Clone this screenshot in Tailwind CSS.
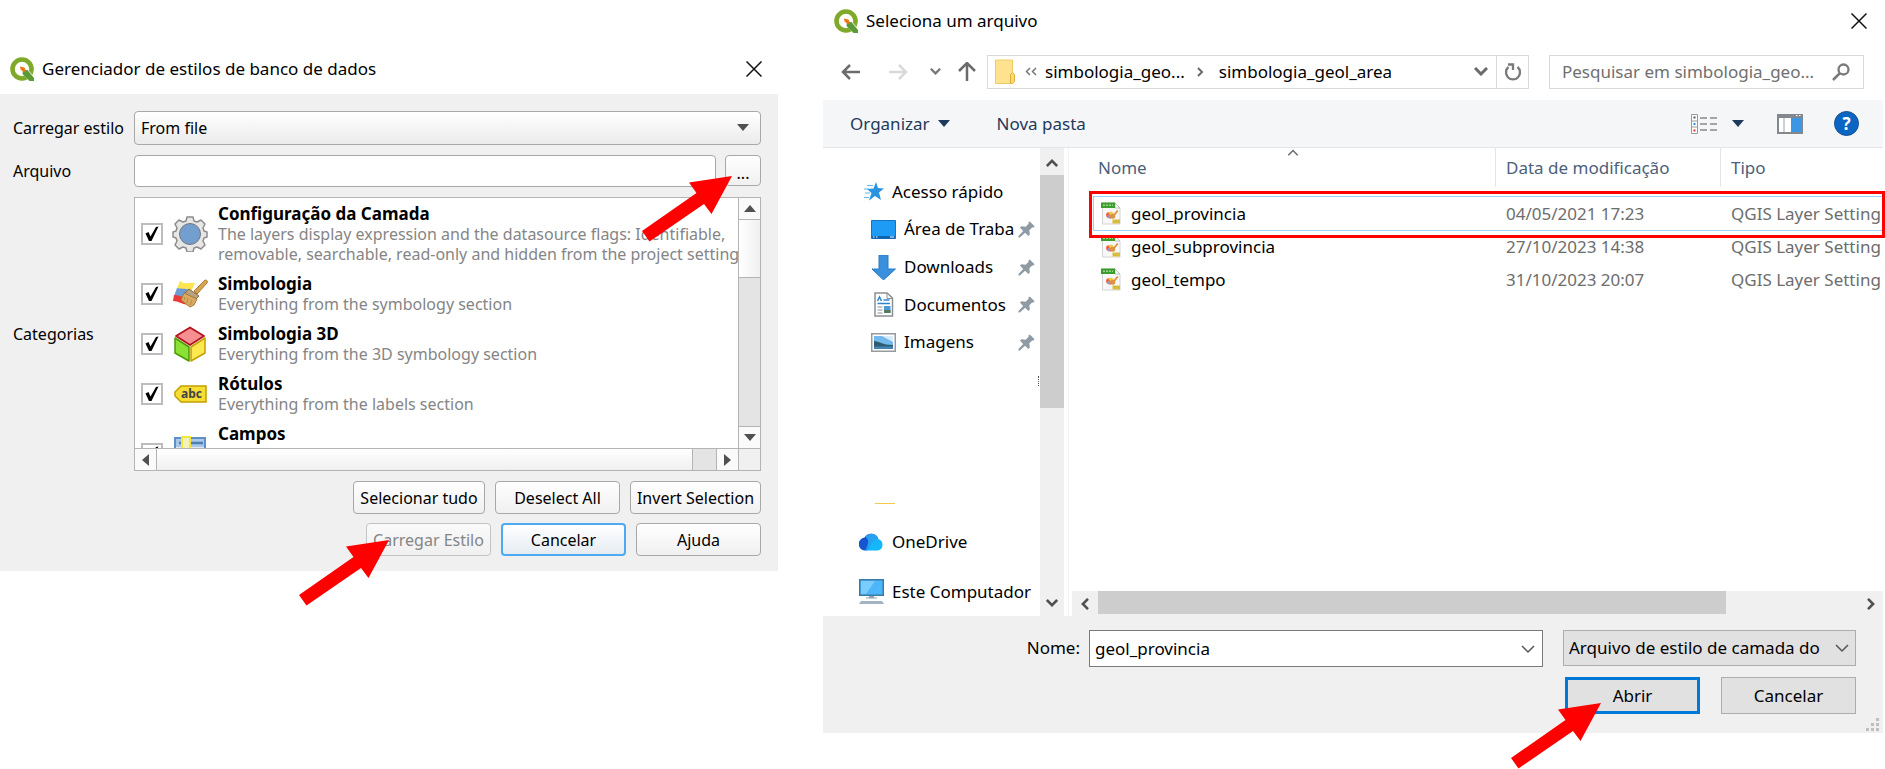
<!DOCTYPE html>
<html lang="pt-BR">
<head>
    <meta charset="UTF-8">
    <meta name="viewport" content="width=device-width, initial-scale=1.0">
    <title>QGIS - Carregar estilo</title>
    <script src="https://cdn.jsdelivr.net/npm/@tailwindcss/browser@4"></script>
    <style>
        body {
            font-family: 'Noto Sans', 'Open Sans', sans-serif;
        }
    </style>
</head>
<body class="min-h-screen bg-white text-[17px] leading-5 text-black overflow-x-hidden">
    <!-- Shared shapes -->
    <svg class="hidden">
        <symbol id="qgis" viewBox="0 0 24 24">
            <circle cx="12" cy="12" r="9.5" fill="none" stroke="#7fa929" stroke-width="4.6" />
            <path d="M13.5 12.5h4.5l6 7.5v4h-4.500l-7.500-7.500z" fill="#fff" />
            <path d="M13 13h4.500l6.500 8v3h-4.500l-7-7z" fill="#5c9a35" />
            <path d="M10 9.500l4.500 1 1.500 3.500-2.500 1-3-2.500z" fill="#ee7913" />
        </symbol>
        <symbol id="close" viewBox="0 0 16 16">
            <path d="M0.500 0.500l15 15M15.500 0.500l-15 15" fill="none" stroke="#111" stroke-width="1.500" />
        </symbol>
        <symbol id="arrow" viewBox="0 0 90 67">
            <path d="M90 1L69.500 39 62 29 7.500 66.500 0 56 54.500 18 47 7.500z" fill="#ff0000" />
        </symbol>
        <symbol id="check" viewBox="0 0 22 22">
            <path d="M4.500 10.500l3-1.500 2 4.500L15 4l2.500-.5L10.500 18H8z" fill="#000" />
        </symbol>
        <symbol id="chevron" viewBox="0 0 14 9">
            <path d="M1 1l6 6 6-6" fill="none" stroke="currentColor" />
        </symbol>
        <symbol id="pin" viewBox="0 0 18 18">
            <path d="M11 1.500L12.500.5l5 5-1 1.500-1.500-.2-3 3 .5 4.500-1.500 1.700-3.500-3.500L2 17.500H.5V16l5-5.500L2 7l1.700-1.500 4.500.5 3-3z" fill="#8f9aa3" />
        </symbol>
        <symbol id="qml" viewBox="0 0 20 23">
            <path d="M1.500 1h12.500l5 5v16H1.500z" fill="#f8f8f8" stroke="#d4d4d4" />
            <path d="M14 1v5h5z" fill="#fff" stroke="#bdbdbd" />
            <path d="M0 .5h14v5.500H0z" fill="#3a9d2c" />
            <path d="M2 3.300h10" stroke="#9ad48f" stroke-width="1.500" stroke-dasharray="2 1" />
            <path d="M5 13c0-2.500 3-3.500 5.500-2.500l3 3-3 3C7.500 17 5 15.500 5 13z" fill="#ef5a3c" />
            <path d="M7 10.500l4-1 2 2.500-4 1z" fill="#f3c94a" />
            <path d="M6 13.500l3-.5.5 2.500-2 .5z" fill="#7aa6d8" />
            <path d="M16 8l1.500 1-3.500 4.500.3 2-2.300 1.500-3.500-2.500 2-2.500 2.500-.3z" fill="#dd9344" />
            <path d="M11.500 17.500H19v4h-7.500z" fill="#d8bd3c" />
        </symbol>
    </svg>

    <main class="grid grid-cols-[778fr_1060fr] gap-[45px] pr-[2px] pb-9 items-start">

        <!-- Database styles manager -->
        <section class="pt-[44px]">
            <header class="h-[50px] pl-[10px] pr-4 flex items-center">
                <svg class="size-[24px] mr-2"><use href="#qgis" /></svg>
                <h1 class="flex-1">Gerenciador de estilos de banco de dados</h1>
                <button aria-label="Fechar"><svg class="size-4"><use href="#close" /></svg></button>
            </header>

            <form class="bg-[#f0f0f0] pt-[17px] pb-[15px] pl-[13px] pr-[17px] text-[16px]">
                <div class="grid grid-cols-[121px_1fr] gap-y-[10px] items-center">
                    <label for="load-from">Carregar estilo</label>
                    <div class="relative">
                        <select id="load-from" class="appearance-none block w-full h-[34px] pl-[6px] border border-[#a8a8a8] rounded bg-linear-to-b from-white to-[#ebebeb]">
                            <option>From file</option>
                        </select>
                        <svg class="absolute right-3 top-[13px] w-3 h-[7px]" viewBox="0 0 12 7"><path d="M0 0h12L6 7z" fill="#505050" /></svg>
                    </div>

                    <label for="file">Arquivo</label>
                    <div class="flex gap-[9px]">
                        <input id="file" type="text" class="flex-1 h-8 px-2 bg-white border border-[#a8a8a8] rounded">
                        <div class="relative">
                            <button type="button" class="block w-9 h-[31px] pt-1 border border-[#a8a8a8] rounded bg-linear-to-b from-white to-[#f0f0f0]">...</button>
                            <svg class="absolute right-[29px] top-5 w-[90px] h-[67px] z-10"><use href="#arrow" /></svg>
                        </div>
                    </div>

                    <span>Categorias</span>
                    <div class="h-[274px] bg-white border border-[#b4b4b4] grid grid-cols-[1fr_22px] grid-rows-[1fr_22px] overflow-hidden">
                        <div class="overflow-hidden pl-[6px] pt-px h-[250px]">
                            <label class="flex items-center h-[70px] whitespace-nowrap">
                                <span class="relative shrink-0 mr-[9px]">
                                    <input type="checkbox" checked class="block appearance-none size-[22px] border-2 border-[#bdbdbd] bg-white">
                                    <svg class="absolute inset-0 size-[22px]"><use href="#check" /></svg>
                                </span>
                                <svg class="shrink-0 size-9 mr-[10px]" viewBox="0 0 36 36">
                                    <path d="M15 1h6l1 4 3 1 4-2 4 4-2 4 1 3 3 1v5l-3 1-1 3 2 4-4 4-4-2-3 1-1 4h-6l-1-4-3-1-4 2-4-4 2-4-1-3-3-1v-5l3-1 1-3-2-4 4-4 4 2 3-1z" fill="#e6e6e6" stroke="#8c8c8c" stroke-width="1.500" stroke-linejoin="round" />
                                    <circle cx="18" cy="18" r="10.500" fill="#729fcf" stroke="#777" />
                                </svg>
                                <span>
                                    <b class="block text-[17px]">Configuração da Camada</b>
                                    <span class="block text-[#858585]">The layers display expression and the datasource flags: Identifiable,<br>removable, searchable, read-only and hidden from the project settings</span>
                                </span>
                            </label>
                            <label class="flex items-center h-[50px] whitespace-nowrap">
                                <span class="relative shrink-0 mr-[9px]">
                                    <input type="checkbox" checked class="block appearance-none size-[22px] border-2 border-[#bdbdbd] bg-white">
                                    <svg class="absolute inset-0 size-[22px]"><use href="#check" /></svg>
                                </span>
                                <svg class="shrink-0 size-9 mr-[10px]" viewBox="0 0 36 36">
                                    <path d="M8 5c5 4 9 1 15 2l-4 9-14-4z" fill="#fbe652" />
                                    <path d="M5 12c4 1 8 0 13 2l-3 9-13-3z" fill="#6f9bd0" />
                                    <path d="M2 19c4 0 7 2 11 2l4 7c-5 2-10-3-16-3z" fill="#ea3a34" />
                                    <path d="M33 4c2 0 3 1 2 3L25 18l-3-3z" fill="#d9a44e" stroke="#a87a35" />
                                    <path d="M17 13l10 7-3 3-12-5z" fill="#b9a184" stroke="#8d6a35" />
                                    <path d="M12 17l13 6-3 6-4 2-9-7z" fill="#d9aa62" stroke="#a87a35" />
                                    <path d="M13 21l-1 3M16 22l-1 5M20 24l-2 5" stroke="#b98942" />
                                </svg>
                                <span>
                                    <b class="block text-[17px]">Simbologia</b>
                                    <span class="block text-[#858585]">Everything from the symbology section</span>
                                </span>
                            </label>
                            <label class="flex items-center h-[50px] whitespace-nowrap">
                                <span class="relative shrink-0 mr-[9px]">
                                    <input type="checkbox" checked class="block appearance-none size-[22px] border-2 border-[#bdbdbd] bg-white">
                                    <svg class="absolute inset-0 size-[22px]"><use href="#check" /></svg>
                                </span>
                                <svg class="shrink-0 size-9 mr-[10px]" viewBox="0 0 36 36">
                                    <path d="M18 1.500l14 8.500-14 9-14-9z" fill="#f58f92" stroke="#b3131b" stroke-width="1.800" stroke-linejoin="round" />
                                    <path d="M3 12l14 9v14L3 27z" fill="#8ae234" stroke="#4e9a06" stroke-width="1.500" stroke-linejoin="round" />
                                    <path d="M33 12l-14 9v14l14-8z" fill="#fce94f" stroke="#c4a000" stroke-width="1.500" stroke-linejoin="round" />
                                </svg>
                                <span>
                                    <b class="block text-[17px]">Simbologia 3D</b>
                                    <span class="block text-[#858585]">Everything from the 3D symbology section</span>
                                </span>
                            </label>
                            <label class="flex items-center h-[50px] whitespace-nowrap">
                                <span class="relative shrink-0 mr-[9px]">
                                    <input type="checkbox" checked class="block appearance-none size-[22px] border-2 border-[#bdbdbd] bg-white">
                                    <svg class="absolute inset-0 size-[22px]"><use href="#check" /></svg>
                                </span>
                                <svg class="shrink-0 size-9 mr-[10px]" viewBox="0 0 36 36">
                                    <path d="M9 10h25v16H9l-6-6v-4z" fill="#f6de35" stroke="#c4a000" stroke-width="1.500" />
                                    <text x="9" y="22" font-size="12" font-weight="700" fill="#444">abc</text>
                                </svg>
                                <span>
                                    <b class="block text-[17px]">Rótulos</b>
                                    <span class="block text-[#858585]">Everything from the labels section</span>
                                </span>
                            </label>
                            <label class="flex items-center h-[70px] whitespace-nowrap">
                                <span class="relative shrink-0 mr-[9px]">
                                    <input type="checkbox" checked class="block appearance-none size-[22px] border-2 border-[#bdbdbd] bg-white">
                                    <svg class="absolute inset-0 size-[22px]"><use href="#check" /></svg>
                                </span>
                                <svg class="shrink-0 size-9 mr-[10px]" viewBox="0 0 36 36">
                                    <path d="M3 2h30v30H3z" fill="#dce9f6" stroke="#5f8fc4" stroke-width="2" />
                                    <path d="M4 3h28v8H4z" fill="#a9c8e8" />
                                    <path d="M7 7h24" stroke="#4d7fb5" stroke-width="2.500" />
                                    <path d="M10 1h8v30h-8z" fill="#f5f0c0" stroke="#f5e63c" stroke-width="2" />
                                </svg>
                                <span>
                                    <b class="block text-[17px]">Campos</b>
                                    <span class="block text-[#858585]">Virtual fields, aliases, default value expressions and constraints from<br>the form section</span>
                                </span>
                            </label>
                        </div>
                        <!-- vertical scrollbar -->
                        <div class="border-l border-[#b4b4b4] bg-[#e4e4e4] flex flex-col">
                            <div class="h-[22px] bg-[#fafafa] border-b border-[#b4b4b4] grid place-items-center">
                                <svg class="w-3 h-[7px]" viewBox="0 0 12 7"><path d="M0 7h12L6 0z" fill="#505050" /></svg>
                            </div>
                            <div class="h-[58px] bg-linear-to-r from-white to-[#f0f0f0] border-b border-[#b4b4b4]"></div>
                            <div class="mt-auto h-[22px] bg-[#fafafa] border-t border-[#b4b4b4] grid place-items-center">
                                <svg class="w-3 h-[7px]" viewBox="0 0 12 7"><path d="M0 0h12L6 7z" fill="#505050" /></svg>
                            </div>
                        </div>
                        <!-- horizontal scrollbar -->
                        <div class="border-t border-[#b4b4b4] bg-[#e4e4e4] flex">
                            <div class="w-[22px] bg-[#fafafa] border-r border-[#b4b4b4] grid place-items-center">
                                <svg class="w-[7px] h-3" viewBox="0 0 7 12"><path d="M7 0v12L0 6z" fill="#505050" /></svg>
                            </div>
                            <div class="flex-1 mr-[23px] bg-linear-to-b from-white to-[#f0f0f0] border-r border-[#b4b4b4]"></div>
                            <div class="w-[22px] bg-[#fafafa] border-l border-[#b4b4b4] grid place-items-center">
                                <svg class="w-[7px] h-3" viewBox="0 0 7 12"><path d="M0 0v12l7-6z" fill="#505050" /></svg>
                            </div>
                        </div>
                        <div class="border-t border-l border-[#b4b4b4] bg-[#f0f0f0]"></div>
                    </div>
                </div>

                <div class="mt-[10px] flex justify-end gap-[10px]">
                    <button type="button" class="w-[132px] h-[33px] border border-[#a8a8a8] rounded bg-linear-to-b from-white to-[#f0f0f0] whitespace-nowrap">Selecionar tudo</button>
                    <button type="button" class="w-[125px] h-[33px] border border-[#a8a8a8] rounded bg-linear-to-b from-white to-[#f0f0f0]">Deselect All</button>
                    <button type="button" class="w-[131px] h-[33px] border border-[#a8a8a8] rounded bg-linear-to-b from-white to-[#f0f0f0] whitespace-nowrap">Invert Selection</button>
                </div>
                <div class="mt-[9px] flex justify-end gap-[10px]">
                    <div class="relative">
                        <button type="button" disabled class="block w-[125px] h-[33px] border border-[#c4c4c4] rounded bg-linear-to-b from-[#fafafa] to-[#f0f0f0] text-[#858585] whitespace-nowrap">Carregar Estilo</button>
                        <svg class="absolute right-[102px] top-4 w-[90px] h-[67px] z-10"><use href="#arrow" /></svg>
                    </div>
                    <button type="button" class="w-[125px] h-[33px] border-2 border-[#4daaf2] rounded bg-linear-to-b from-white to-[#e6ecf2]">Cancelar</button>
                    <button type="button" class="w-[125px] h-[33px] border border-[#a8a8a8] rounded bg-linear-to-b from-white to-[#f0f0f0]">Ajuda</button>
                </div>
            </form>
        </section>

        <!-- File picker -->
        <section>
            <header class="h-[42px] pl-[11px] pr-4 flex items-center">
                <svg class="size-[24px] mr-2"><use href="#qgis" /></svg>
                <h1 class="flex-1">Seleciona um arquivo</h1>
                <button aria-label="Fechar"><svg class="size-4"><use href="#close" /></svg></button>
            </header>

            <nav class="h-[58px] pl-[18px] pr-[19px] pt-px flex items-center">
                <button aria-label="Voltar"><svg class="w-5 h-4" viewBox="0 0 20 16"><path d="M9 1L2 8l7 7M2 8h17" fill="none" stroke="#6b6b6b" stroke-width="2.500" /></svg></button>
                <button aria-label="Avançar" class="ml-[27px]"><svg class="w-5 h-4" viewBox="0 0 20 16"><path d="M11 1l7 7-7 7M18 8H1" fill="none" stroke="#d9d9d9" stroke-width="2.500" /></svg></button>
                <button aria-label="Recentes" class="ml-[22px]"><svg class="w-[11px] h-[7px] text-[#7a7a7a] stroke-[3px]"><use href="#chevron" /></svg></button>
                <button aria-label="Acima" class="ml-[17px]"><svg class="w-[18px] h-[19px]" viewBox="0 0 18 19"><path d="M1 9l8-8 8 8M9 1.500V19" fill="none" stroke="#6b6b6b" stroke-width="2.500" /></svg></button>
                <div class="ml-[11px] flex-1 h-[34px] border border-[#d9d9d9] flex items-center">
                    <svg class="w-5 h-[26px] ml-[7px]" viewBox="0 0 20 26"><path d="M.5 1H17.500V24.500H.5z" fill="#ffe290" stroke="#f0cc62" /><path d="M15.500 24.500v-9l2-2 2 2v7l-2 2z" fill="#ffd969" stroke="#dcb040" /></svg>
                    <svg class="w-3 h-[9px] ml-[10px]" viewBox="0 0 12 9"><path d="M5 1L1.500 4.500 5 8M11 1L7.500 4.500 11 8" fill="none" stroke="#777" stroke-width="1.500" /></svg>
                    <a href="#" class="ml-2">simbologia_geo...</a>
                    <svg class="w-[7px] h-[10px] ml-3" viewBox="0 0 7 10"><path d="M1 1l4 4-4 4" fill="none" stroke="#6b6b6b" stroke-width="2" /></svg>
                    <a href="#" class="ml-[15px] flex-1">simbologia_geol_area</a>
                    <button aria-label="Histórico" class="mr-[8px]"><svg class="w-[14px] h-[9px] text-[#6b6b6b] stroke-[3px]"><use href="#chevron" /></svg></button>
                    <button aria-label="Atualizar" class="w-8 h-8 border-l border-[#d9d9d9] grid place-items-center">
                        <svg class="size-[18px]" viewBox="0 0 18 18"><path d="M4.500 4A7 7 0 1 0 13.500 4M4 1.500h5v5.500" fill="none" stroke="#7a7a7a" stroke-width="2.300" /></svg>
                    </button>
                </div>
                <div class="ml-[20px] w-[315px] h-[34px] border border-[#d9d9d9] flex items-center">
                    <input type="search" aria-label="Pesquisar" placeholder="Pesquisar em simbologia_geo..." class="flex-1 min-w-0 pl-3 outline-none placeholder:text-[#6f6f6f]">
                    <svg class="size-[18px] mr-[13px]" viewBox="0 0 18 18"><circle cx="11.500" cy="6.500" r="5" fill="none" stroke="#7a7a7a" stroke-width="2.300" /><path d="M8 10l-7 7" stroke="#7a7a7a" stroke-width="2.500" /></svg>
                </div>
            </nav>

            <div class="h-12 bg-[#f5f6f7] border-b border-[#e3e5e8] pl-[27px] pr-6 flex items-center text-[#1e395b]">
                <button class="flex items-center gap-2">Organizar <svg class="w-3 h-[7px]" viewBox="0 0 12 7"><path d="M0 0h12L6 7z" fill="#1e395b" /></svg></button>
                <button class="ml-[47px]">Nova pasta</button>
                <button aria-label="Modo de exibição" class="ml-auto flex items-center gap-[15px]">
                    <svg class="w-[26px] h-5" viewBox="0 0 26 20">
                        <path d="M.5.500h6v19h-6zM.5 7h6M.5 13h6" fill="#fff" stroke="#9a9a9a" />
                        <path d="M2.500 3.500h2" stroke="#555" stroke-width="2" /><path d="M2.500 10h2" stroke="#2a8dea" stroke-width="2" /><path d="M2.500 16.500h2" stroke="#e0352c" stroke-width="2" />
                        <path d="M9 4h7M19 4h7M9 10h7M19 10h7M9 16h7M19 16h7" stroke="#8a8a8a" stroke-width="1.500" />
                    </svg>
                    <svg class="w-3 h-[7px]" viewBox="0 0 12 7"><path d="M0 0h12L6 7z" fill="#1e395b" /></svg>
                </button>
                <button aria-label="Painel de visualização" class="ml-[33px]">
                    <svg class="w-[26px] h-5" viewBox="0 0 26 20"><path d="M1 1h24v18H1z" fill="#fff" stroke="#82888e" stroke-width="2" /><path d="M0 0h26v4H0z" fill="#82888e" /><path d="M7 4v14" stroke="#9da3a8" /><path d="M14 4h10v14H14z" fill="#3b97e3" /><path d="M19 1.500h1.500M22 1.500h1.500" stroke="#fff" /></svg>
                </button>
                <button aria-label="Ajuda" class="ml-[31px] size-[25px] rounded-full bg-[#0a66c2] border border-[#16508f] text-white font-bold leading-[22px]">?</button>
            </div>

            <div class="flex h-[468px]">
                <!-- Places -->
                <aside class="relative w-[217px] pt-[25px] overflow-hidden">
                    <a href="#" class="flex items-center h-[37px] pl-[41px]">
                        <svg class="w-5 h-[19px] mr-2" viewBox="0 0 20 19"><path d="M12 0l2 6 6 .5-5 4 2 7.500-6-4-6 4.500 2.500-7.500L3 7l6.500-.5z" fill="#2b93e0" /><path d="M3 3.500h6M0 7h5M1 11h5M0 15.500h5" stroke="#65b5ee" stroke-width="1.200" /></svg>
                        Acesso rápido
                    </a>
                    <a href="#" class="flex items-center h-[38px] pl-12 pr-[5px]">
                        <svg class="w-[25px] h-[19px] mr-2 shrink-0" viewBox="0 0 25 19"><path d="M.5.500h24v18H.5z" fill="#1e9bf4" stroke="#1673c2" /><path d="M1 16h23v2.500H1z" fill="#0f62ad" /><path d="M2 17h1.500M5 17h1.500M19 17h4" stroke="#fff" stroke-width="1.200" /></svg>
                        <span class="flex-1 overflow-hidden whitespace-nowrap">Área de Trabalho</span>
                        <svg class="size-[17px] ml-1 shrink-0"><use href="#pin" /></svg>
                    </a>
                    <a href="#" class="flex items-center h-[38px] pl-12 pr-[5px]">
                        <svg class="w-[25px] h-[25px] mr-2 shrink-0" viewBox="0 0 25 25"><path d="M8 0h9v14h7.500L12.500 25 1 14h7z" fill="#3a90dc" stroke="#2b7cc6" /></svg>
                        <span class="flex-1">Downloads</span>
                        <svg class="size-[17px] ml-1 shrink-0"><use href="#pin" /></svg>
                    </a>
                    <a href="#" class="flex items-center h-[37px] pl-12 pr-[5px]">
                        <svg class="w-[25px] h-[25px] mr-2 shrink-0" viewBox="0 0 25 25"><path d="M4 1h12l5.500 5v18H4z" fill="#fff" stroke="#8a8f94" stroke-width="1.500" /><path d="M16 1v5.500h5" fill="none" stroke="#8a8f94" /><path d="M6.500 9l2-4 2 4M12.500 8h6M6.500 11.500h12.500" fill="none" stroke="#2f86d0" stroke-width="1.500" /><path d="M6.500 15h5M6.500 18h5M6.500 21h5" stroke="#8a8f94" /><path d="M13 14h6.500v7H13z" fill="#4b9ad0" /><path d="M13 18h6.500v3H13z" fill="#557a5c" /></svg>
                        <span class="flex-1">Documentos</span>
                        <svg class="size-[17px] ml-1 shrink-0"><use href="#pin" /></svg>
                    </a>
                    <a href="#" class="flex items-center h-[38px] pl-12 pr-[5px]">
                        <svg class="w-[25px] h-[19px] mr-2 shrink-0" viewBox="0 0 25 19"><path d="M.75.750h23.500v17.500H.75z" fill="#fff" stroke="#959a9f" stroke-width="1.500" /><path d="M3 3h19v13H3z" fill="#74b9ec" /><path d="M11 3h11v6z" fill="#d8edfa" /><path d="M3 8c5 0 8 4 19 4v4H3z" fill="#2f5c70" /><path d="M3 13.500h19V16H3z" fill="#4386b5" /></svg>
                        <span class="flex-1">Imagens</span>
                        <svg class="size-[17px] ml-1 shrink-0"><use href="#pin" /></svg>
                    </a>
                    <div class="mt-[15px] ml-auto mr-px w-px h-[10px] border-l border-dotted border-[#555]"></div>
                    <div class="mt-[117px] ml-[52px] w-5 h-px bg-[#f2c94c]"></div>
                    <a href="#" class="mt-[19px] flex items-center h-[37px] pl-9">
                        <svg class="w-[25px] h-[18px] mr-2" viewBox="0 0 25 18"><path d="M7 17.500a6.500 6.500 0 0 1-1.500-13A7.500 7.500 0 0 1 19 5.500L12 16z" fill="#1456d0" /><path d="M6.500 3.500A7.500 7.500 0 0 1 19.500 6L13 12 6 17.500C9 12 11 8 6.500 3.500z" fill="#27a0f0" /><path d="M6 17.500C12 16 12 6 19.500 6a6 6 0 0 1-.5 11.500z" fill="#16b6fb" /></svg>
                        OneDrive
                    </a>
                    <a href="#" class="mt-[13px] flex items-center h-[37px] pl-9 whitespace-nowrap">
                        <svg class="w-[25px] h-[25px] mr-2 shrink-0" viewBox="0 0 25 25"><path d="M.75.750h23.500v15.500H.75z" fill="#4db6fb" stroke="#3a7ba8" stroke-width="1.500" /><path d="M2 2h14L7 15H2z" fill="#7accfd" /><path d="M10 17h5v1.500h3v1H7v-1h3z" fill="#94a3b1" /><path d="M2 22h21l2 3H0z" fill="#a3b3c4" /></svg>
                        Este Computador
                    </a>
                </aside>
                <div class="w-6 bg-[#f0f0f0] flex flex-col items-center text-[#505050]">
                    <svg class="w-3 h-2 mt-[11px] rotate-180 stroke-[3px]"><use href="#chevron" /></svg>
                    <div class="mt-2 w-full h-[233px] bg-[#cdcdcd]"></div>
                    <svg class="w-3 h-2 mt-auto mb-[9px] stroke-[3px]"><use href="#chevron" /></svg>
                </div>
                <div class="w-[5px] border-r border-[#f3f3f3]"></div>

                <!-- Files -->
                <div class="relative flex-1 min-w-0 flex flex-col">
                    <table class="ml-[25px] w-[calc(100%-25px)] table-fixed text-left">
                        <colgroup>
                            <col>
                            <col class="w-[225px]">
                            <col class="w-[162px]">
                        </colgroup>
                        <thead class="text-[#4c607a]">
                            <tr>
                                <th class="h-[49px] p-0 align-top font-normal"><div class="h-[39px] pl-1 flex items-center border-r border-[#e5e5e5]">Nome</div></th>
                                <th class="h-[49px] p-0 align-top font-normal"><div class="h-[39px] pl-[10px] flex items-center border-r border-[#e5e5e5]">Data de modificação</div></th>
                                <th class="h-[49px] p-0 align-top font-normal"><div class="h-[39px] pl-[10px] flex items-center">Tipo</div></th>
                            </tr>
                        </thead>
                        <tbody class="text-[#6d6d6d] whitespace-nowrap">
                            <tr class="outline outline-[#99d1ff]">
                                <td class="h-[33px] p-0 text-black"><span class="flex items-center pl-[7px]"><svg class="w-5 h-[23px] mr-[10px]"><use href="#qml" /></svg>geol_provincia</span></td>
                                <td class="p-0 pl-[10px]">04/05/2021 17:23</td>
                                <td class="p-0 pl-[10px]">QGIS Layer Setting</td>
                            </tr>
                            <tr>
                                <td class="h-[33px] p-0 text-black"><span class="flex items-center pl-[7px]"><svg class="w-5 h-[23px] mr-[10px]"><use href="#qml" /></svg>geol_subprovincia</span></td>
                                <td class="p-0 pl-[10px]">27/10/2023 14:38</td>
                                <td class="p-0 pl-[10px]">QGIS Layer Setting</td>
                            </tr>
                            <tr>
                                <td class="h-[33px] p-0 text-black"><span class="flex items-center pl-[7px]"><svg class="w-5 h-[23px] mr-[10px]"><use href="#qml" /></svg>geol_tempo</span></td>
                                <td class="p-0 pl-[10px]">31/10/2023 20:07</td>
                                <td class="p-0 pl-[10px]">QGIS Layer Setting</td>
                            </tr>
                        </tbody>
                    </table>
                    <!-- sort marker and highlight frame lie over the table -->
                    <svg class="absolute left-[218px] top-px w-3 h-[7px] rotate-180 text-[#6b6b6b] stroke-2"><use href="#chevron" /></svg>
                    <div class="absolute left-5 -right-[2px] top-[43px] h-[47px] border-[3px] border-[#ff0000]"></div>

                    <div class="mt-auto ml-[3px] h-[25px] bg-[#f0f0f0] flex items-center text-[#505050]">
                        <svg class="w-3 h-2 mx-[7px] rotate-90 stroke-[3px]"><use href="#chevron" /></svg>
                        <div class="w-[628px] h-[23px] self-start bg-[#cdcdcd]"></div>
                        <svg class="w-3 h-2 ml-auto mr-[6px] -rotate-90 stroke-[3px]"><use href="#chevron" /></svg>
                    </div>
                </div>
            </div>

            <form class="relative bg-[#f0f0f0] pt-[14px] pb-[19px] pr-[27px]">
                <div class="flex">
                    <label for="name" class="w-[257px] mr-[9px] text-right leading-9">Nome:</label>
                    <div class="relative flex-1">
                        <input id="name" type="text" value="geol_provincia" class="block w-full h-[37px] pl-[5px] bg-white border border-[#7a7a7a]">
                        <svg class="absolute right-2 top-[15px] w-[14px] h-[9px] text-[#555] stroke-[1.5px]"><use href="#chevron" /></svg>
                    </div>
                    <div class="relative ml-5 w-[293px]">
                        <select aria-label="Tipo de arquivo" class="appearance-none block w-full h-9 pl-[5px] pr-[30px] bg-[#e1e1e1] border border-[#adadad] overflow-hidden text-clip">
                            <option>Arquivo de estilo de camada do QGIS</option>
                        </select>
                        <svg class="absolute right-[7px] top-[14px] w-[14px] h-[9px] text-[#555] stroke-[1.5px]"><use href="#chevron" /></svg>
                    </div>
                </div>
                <div class="mt-[10px] flex justify-end gap-[21px]">
                    <div class="relative">
                        <button type="button" class="block w-[135px] h-[37px] bg-[#e1e1e1] border-[3px] border-[#0078d7]">Abrir</button>
                        <svg class="absolute right-[99px] top-[25px] w-[90px] h-[67px] z-10"><use href="#arrow" /></svg>
                    </div>
                    <button type="button" class="w-[135px] h-[37px] bg-[#e1e1e1] border border-[#adadad]">Cancelar</button>
                </div>
                <svg class="absolute right-1 bottom-[2px] size-[13px]" viewBox="0 0 13 13"><path d="M10 0h3v3h-3zM5 5h3v3H5zM10 5h3v3h-3zM0 10h3v3H0zM5 10h3v3H5zM10 10h3v3h-3z" fill="#bfbfbf" /></svg>
            </form>
        </section>
    </main>
</body>
</html>
